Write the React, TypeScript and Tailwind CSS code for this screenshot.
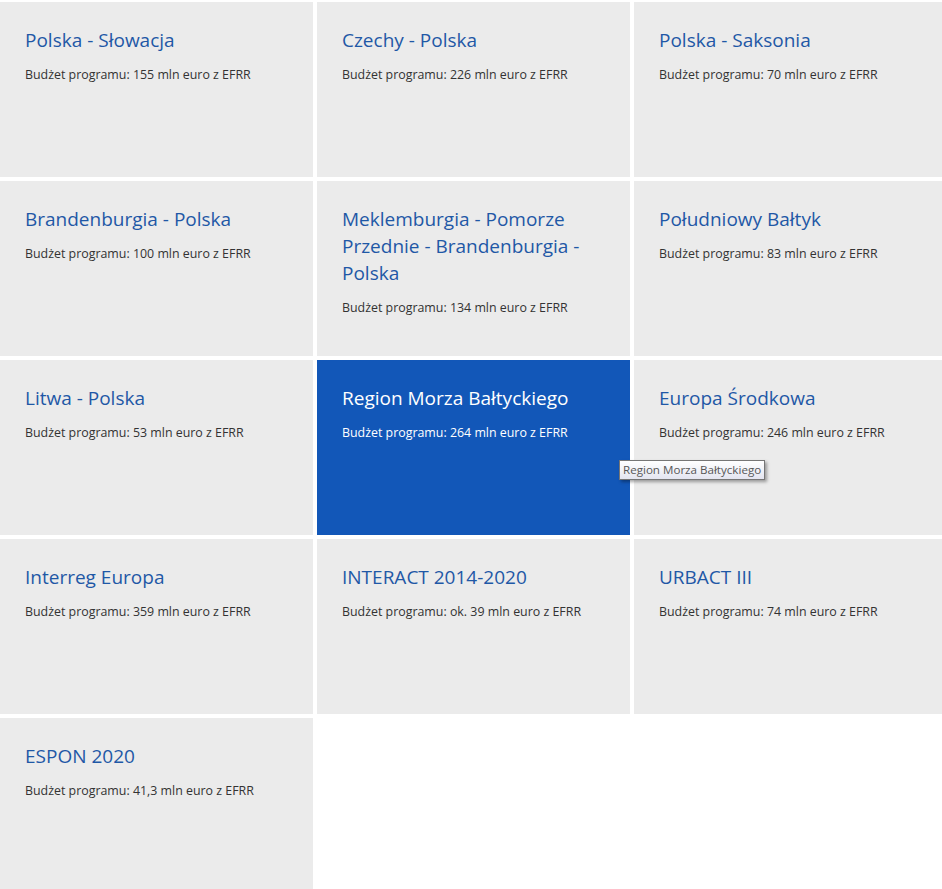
import React from 'react';

type Program = {
  name: string;
  budget: string;
  active?: boolean;
};

const programs: Program[] = [
  { name: 'Polska - Słowacja', budget: '155 mln euro z EFRR' },
  { name: 'Czechy - Polska', budget: '226 mln euro z EFRR' },
  { name: 'Polska - Saksonia', budget: '70 mln euro z EFRR' },
  { name: 'Brandenburgia - Polska', budget: '100 mln euro z EFRR' },
  { name: 'Meklemburgia - Pomorze Przednie - Brandenburgia - Polska', budget: '134 mln euro z EFRR' },
  { name: 'Południowy Bałtyk', budget: '83 mln euro z EFRR' },
  { name: 'Litwa - Polska', budget: '53 mln euro z EFRR' },
  { name: 'Region Morza Bałtyckiego', budget: '264 mln euro z EFRR', active: true },
  { name: 'Europa Środkowa', budget: '246 mln euro z EFRR' },
  { name: 'Interreg Europa', budget: '359 mln euro z EFRR' },
  { name: 'INTERACT 2014-2020', budget: 'ok. 39 mln euro z EFRR' },
  { name: 'URBACT III', budget: '74 mln euro z EFRR' },
  { name: 'ESPON 2020', budget: '41,3 mln euro z EFRR' },
];

function ProgramCard({ p }: { p: Program }) {
  return (
    <a
      href="#"
      className={
        p.active
          ? 'relative block h-[175px] bg-[#1257b8] pl-[25px] pr-[40px] pt-[25px]'
          : 'relative block h-[175px] bg-[#ebebeb] pl-[25px] pr-[40px] pt-[25px]'
      }
    >
      <h3
        className={
          p.active
            ? 'text-[19px] leading-[27px] font-medium text-white'
            : 'text-[19px] leading-[27px] font-medium text-[#1f58a6]'
        }
      >
        {p.name}
      </h3>
      <p
        className={
          p.active
            ? 'mt-[12px] text-[12.4px] leading-[18px] text-white'
            : 'mt-[12px] text-[12.4px] leading-[18px] text-[#333333]'
        }
      >
        Budżet programu: {p.budget}
      </p>
      {p.active && (
        <span className="absolute left-[302px] top-[100px] z-10 whitespace-nowrap border border-[#767676] bg-gradient-to-b from-white to-[#e4e5f0] px-[3px] py-[1px] text-[11.6px] leading-[16px] text-[#575757] shadow-[2px_2px_3px_rgba(0,0,0,0.35)]">
          Region Morza Bałtyckiego
        </span>
      )}
    </a>
  );
}

export default function App() {
  return (
    <div className="min-h-[889px] bg-white pt-[2px]" style={{ fontFamily: '"Open Sans", "Noto Sans", sans-serif' }}>
      <div className="grid grid-cols-[313px_313px_308px] gap-[4px]">
        {programs.map((p) => (
          <ProgramCard key={p.name} p={p} />
        ))}
      </div>
    </div>
  );
}
